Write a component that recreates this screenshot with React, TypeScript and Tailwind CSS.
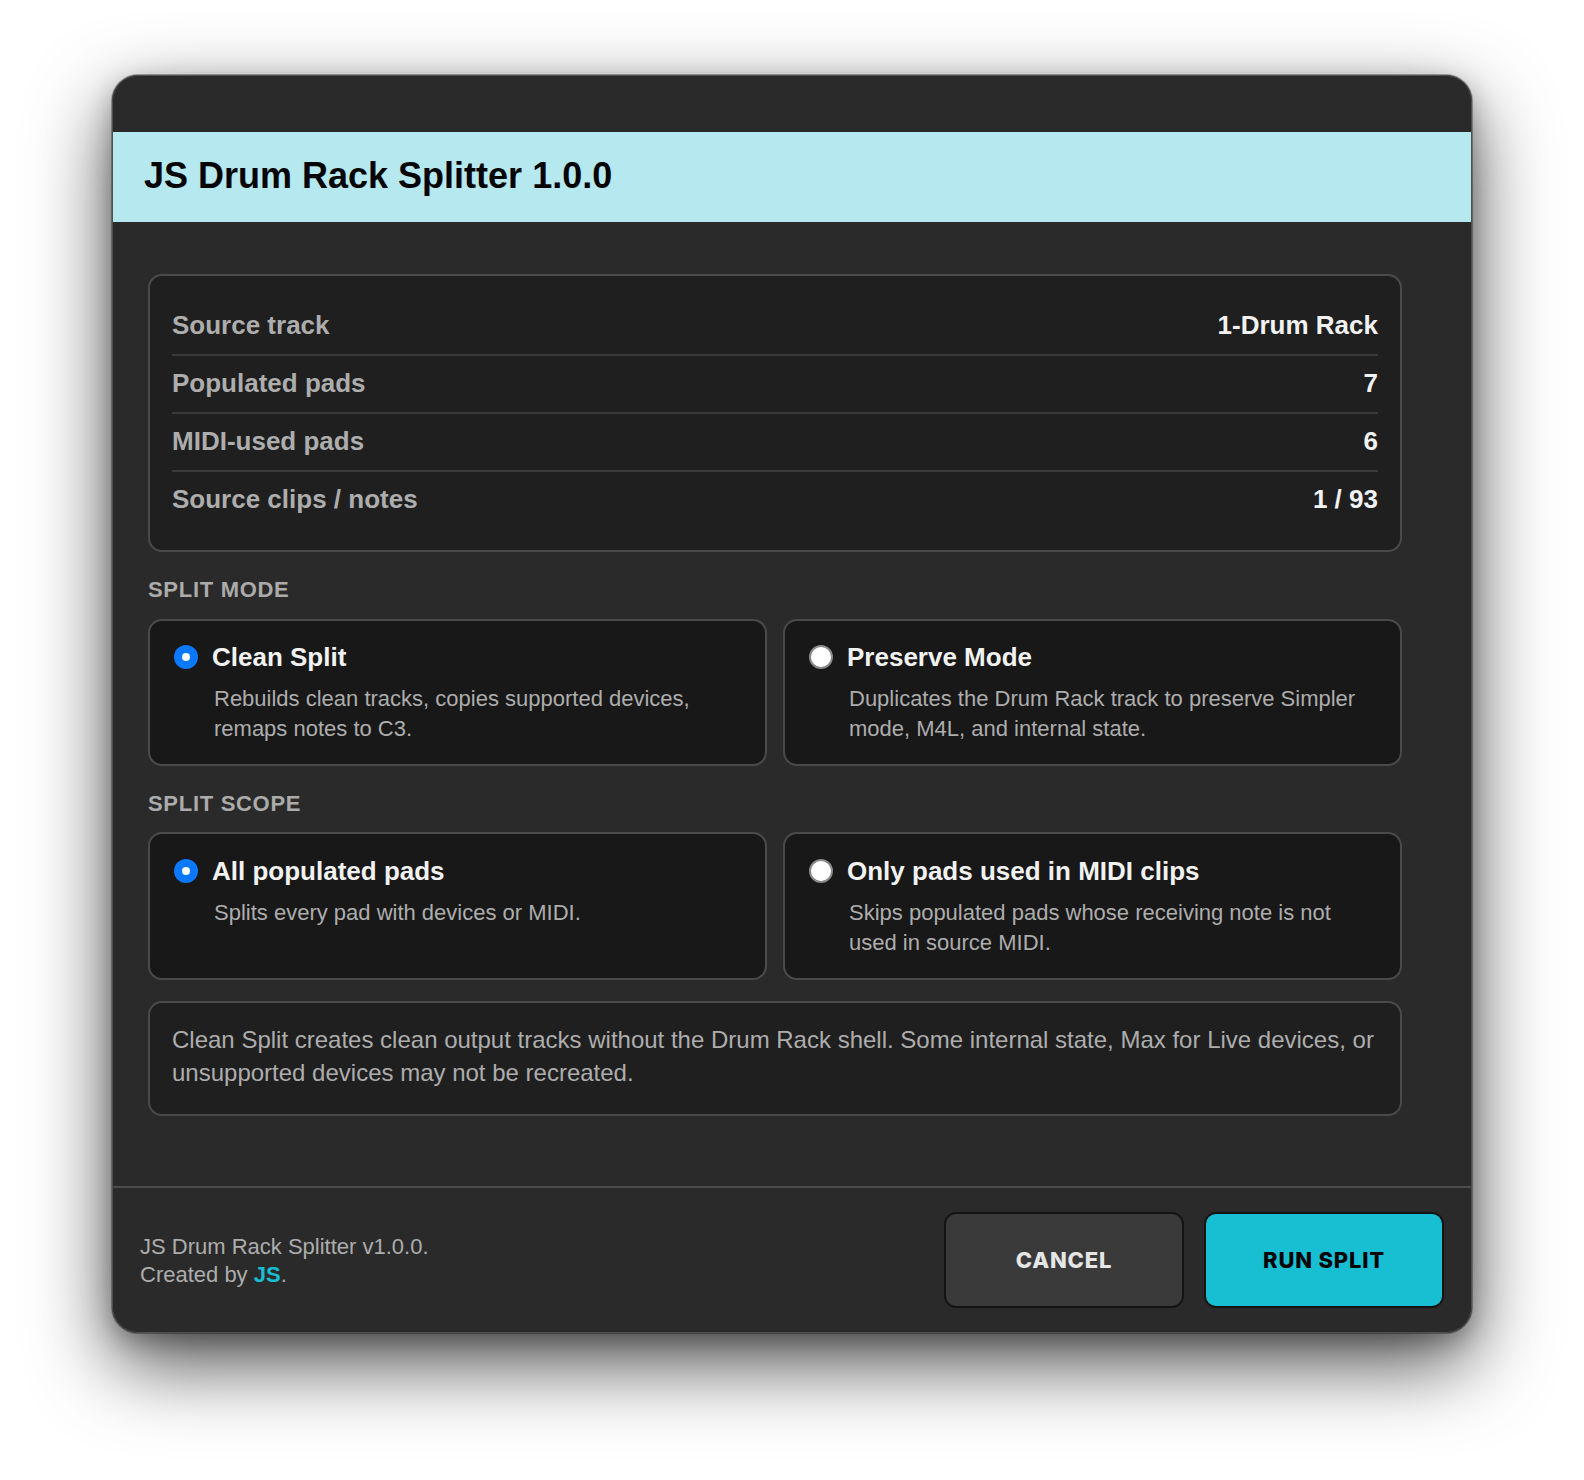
import type { ReactNode } from "react";

const FONT = "font-['Liberation_Sans',Arial,sans-serif]";

const stats = [
  { label: "Source track", value: "1-Drum Rack" },
  { label: "Populated pads", value: "7" },
  { label: "MIDI-used pads", value: "6" },
  { label: "Source clips / notes", value: "1 / 93" },
];

function Radio({ on }: { on?: boolean }) {
  return on ? (
    <span className="flex h-6 w-6 shrink-0 items-center justify-center rounded-full bg-[#0a78ff]">
      <span className="h-2 w-2 rounded-full bg-white" />
    </span>
  ) : (
    <span className="h-6 w-6 shrink-0 rounded-full border-2 border-[#8a8a8a] bg-white" />
  );
}

function OptionCard({
  on,
  tall,
  title,
  children,
}: {
  on?: boolean;
  tall?: boolean;
  title: string;
  children: ReactNode;
}) {
  return (
    <div
      className={`rounded-[14px] border-2 border-[#4a4a4a] bg-[#181818] pl-6 pr-4 ${
        tall ? "h-[148px] pt-[22px]" : "h-[147px] pt-[21px]"
      }`}
    >
      <div className="flex h-[30px] items-center gap-[14px]">
        <Radio on={on} />
        <span className="text-[26px] font-bold text-[#f2f2f2]">{title}</span>
      </div>
      <p className="mt-[12px] pl-[40px] text-[22px] leading-[30px] text-[#adadad]">{children}</p>
    </div>
  );
}

function SectionLabel({ children }: { children: ReactNode }) {
  return (
    <div className="flex h-[26px] items-center text-[22px] font-bold tracking-[0.7px] text-[#ababab]">
      {children}
    </div>
  );
}

export default function App() {
  return (
    <div className={`flex h-[1480px] justify-center bg-white pt-[75px] ${FONT}`}>
      <div className="relative flex h-[1258px] w-[1360px] flex-col overflow-hidden rounded-[26px] bg-[#2a2a2a] shadow-[0_0_0_1px_rgba(0,0,0,0.3),0_8px_24px_rgba(0,0,0,0.25),0_30px_80px_rgba(0,0,0,0.7)]">
        <div className="h-[57px] shrink-0" />
        <div className="flex h-[90px] shrink-0 items-center bg-[#b5e8ef] pb-[2px] pl-[32px]">
          <h1 className="text-[36px] font-bold text-[#050505]">JS Drum Rack Splitter 1.0.0</h1>
        </div>

        <main className="flex-1 pl-[36px] pr-[70px] pt-[52px]">
          <section className="h-[278px] rounded-[14px] border-2 border-[#4a4a4a] bg-[#1f1f1f] px-[22px] pt-[22px]">
            {stats.map((s, i) => (
              <div
                key={s.label}
                className={`flex h-[58px] items-center justify-between text-[26px] font-bold ${
                  i < stats.length - 1 ? "border-b-2 border-[#3a3a3a] pb-[2px]" : "pb-[4px]"
                }`}
              >
                <span className="text-[#adadad]">{s.label}</span>
                <span className="text-[#f2f2f2]">{s.value}</span>
              </div>
            ))}
          </section>

          <div className="mt-[24px]">
            <SectionLabel>SPLIT MODE</SectionLabel>
          </div>
          <div className="mt-[17px] grid grid-cols-2 gap-4">
            <OptionCard on title="Clean Split">
              Rebuilds clean tracks, copies supported devices,
              <br />
              remaps notes to C3.
            </OptionCard>
            <OptionCard title="Preserve Mode">
              Duplicates the Drum Rack track to preserve Simpler
              <br />
              mode, M4L, and internal state.
            </OptionCard>
          </div>

          <div className="mt-[24px]">
            <SectionLabel>SPLIT SCOPE</SectionLabel>
          </div>
          <div className="mt-[16px] grid grid-cols-2 gap-4">
            <OptionCard on tall title="All populated pads">
              Splits every pad with devices or MIDI.
            </OptionCard>
            <OptionCard tall title="Only pads used in MIDI clips">
              Skips populated pads whose receiving note is not
              <br />
              used in source MIDI.
            </OptionCard>
          </div>

          <div className="mt-[21px] h-[115px] rounded-[14px] border-2 border-[#4a4a4a] bg-[#1f1f1f] px-[22px] pt-[20px] text-[24px] leading-[33px] text-[#adadad]">
            Clean Split creates clean output tracks without the Drum Rack shell. Some internal state, Max for Live devices, or
            <br />
            unsupported devices may not be recreated.
          </div>
        </main>

        <footer className="flex h-[147px] shrink-0 items-center justify-between border-t-2 border-[#4a4a4a] pb-[1px] pl-[28px] pr-[28px]">
          <div className="pt-[2px] text-[22px] leading-[28px] text-[#adadad]">
            JS Drum Rack Splitter v1.0.0.
            <br />
            Created by <span className="font-bold text-[#18bfd3]">JS</span>.
          </div>
          <div className="flex gap-[20px] font-['Inter',sans-serif] text-[22px] font-extrabold tracking-[0.8px]">
            <button className="h-[96px] w-[240px] rounded-[12px] border-2 border-[#141414] bg-[#3a3a3a] text-[#e6e6e6]">
              CANCEL
            </button>
            <button className="h-[96px] w-[240px] rounded-[12px] border-2 border-[#141414] bg-[#18bfd3] text-[#050505]">
              RUN SPLIT
            </button>
          </div>
        </footer>

        <div className="pointer-events-none absolute inset-0 rounded-[26px] border border-[#4f4f4f]" />
      </div>
    </div>
  );
}
